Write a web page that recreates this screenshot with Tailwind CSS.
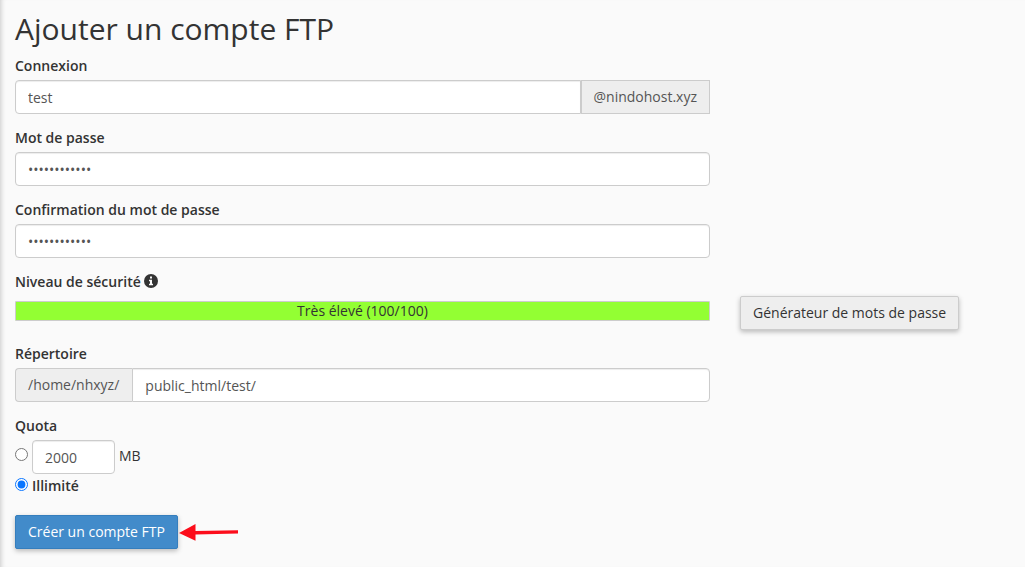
<!DOCTYPE html>
<html lang="fr">
<head>
<meta charset="utf-8">
<meta name="viewport" content="width=device-width, initial-scale=1">
<title>Ajouter un compte FTP</title>
<script src="https://cdn.jsdelivr.net/npm/@tailwindcss/browser@4"></script>
</head>
<body class="min-h-screen bg-[#fafafa] font-['Open_Sans',sans-serif] text-sm leading-5 text-[#333] shadow-[inset_5px_0_5px_-4px_rgba(0,0,0,0.2)]">
<main class="px-[15px] pt-3 pb-4">
  <h1 class="mb-2.5 text-[30px] leading-[34px]">Ajouter un compte FTP</h1>
  <form class="grid grid-cols-[minmax(0,695px)_auto] justify-start gap-x-[30px]">
    <div class="col-start-1 mb-3.5">
      <label for="login" class="mb-1 block font-semibold">Connexion</label>
      <div class="flex h-[34px]">
        <input id="login" type="text" value="test" class="min-w-0 flex-1 rounded-l border border-[#ccc] bg-white px-3 pt-0.5 text-[#555] shadow-[inset_0_1px_1px_rgba(0,0,0,0.075)]">
        <span class="flex items-center border border-[#ccc] bg-[#eee] px-3 text-[#555]">@nindohost.xyz</span>
      </div>
    </div>
    <div class="col-start-1 mb-3.5">
      <label for="password" class="mb-1 block font-semibold">Mot de passe</label>
      <input id="password" type="password" value="motdepasse12" class="block h-[34px] w-full rounded border border-[#ccc] bg-white px-3 text-[#555] shadow-[inset_0_1px_1px_rgba(0,0,0,0.075)]">
    </div>
    <div class="col-start-1 mb-3.5">
      <label for="confirm" class="mb-1 block font-semibold">Confirmation du mot de passe</label>
      <input id="confirm" type="password" value="motdepasse12" class="block h-[34px] w-full rounded border border-[#ccc] bg-white px-3 text-[#555] shadow-[inset_0_1px_1px_rgba(0,0,0,0.075)]">
    </div>
    <div class="col-start-1 mb-3.5">
      <div class="mb-1 flex items-center gap-[3px] font-semibold">
        <span id="strength-label">Niveau de sécurité</span>
        <svg class="mb-0.5 size-3.5" viewBox="0 0 14 14" aria-hidden="true"><circle cx="7" cy="7" r="7" fill="#333"/><path d="M6 2.500h2v2H6zM5 5.700h3v4h1v1.600H5V9.700h1V7.200H5z" fill="#fafafa"/></svg>
      </div>
      <div class="h-[34px] pt-[5px]">
        <div role="meter" aria-labelledby="strength-label" aria-valuenow="100" aria-valuemin="0" aria-valuemax="100" class="h-5 rounded-[1px] border border-[#ccc] bg-[#93ff33] text-center leading-[18px]">Très élevé (100/100)</div>
      </div>
    </div>
    <button type="button" class="col-start-2 mb-3.5 h-[34px] self-end rounded-xs border border-[#ccc] bg-[#eee] px-3 whitespace-nowrap shadow-[0_2px_5px_rgba(0,0,0,0.26)]">Générateur de mots de passe</button>
    <div class="col-start-1 mb-3.5">
      <label for="directory" class="mb-1 block font-semibold">Répertoire</label>
      <div class="flex h-[34px]">
        <span class="flex items-center rounded-l border border-r-0 border-[#ccc] bg-[#eee] pr-[13px] pl-3 text-[#555]">/home/nhxyz/</span>
        <input id="directory" type="text" value="public_html/test/" class="min-w-0 flex-1 rounded-r border border-[#ccc] bg-white px-3 pt-0.5 text-[#555] shadow-[inset_0_1px_1px_rgba(0,0,0,0.075)]">
      </div>
    </div>
    <fieldset class="col-start-1">
      <legend class="mb-1 font-semibold">Quota</legend>
      <div class="flex items-center gap-1">
        <input type="radio" name="quota" aria-label="Quota limité" class="mb-1.5 size-[13px]">
        <input type="text" value="2000" aria-label="Quota en MB" class="h-[34px] w-[83px] rounded border border-[#ccc] bg-white px-3 pt-px text-[#555] shadow-[inset_0_1px_1px_rgba(0,0,0,0.075)]">
        <span class="mb-0.5">MB</span>
      </div>
      <div class="mt-0.5 flex items-center gap-1">
        <input id="unlimited" type="radio" name="quota" checked class="mb-1 size-[13px] accent-[#0a76ff]">
        <label for="unlimited" class="font-semibold">Illimité</label>
      </div>
    </fieldset>
    <div class="col-start-1 mt-[19px] flex items-center gap-px">
      <button type="submit" class="h-[34px] rounded-xs border border-[#357ebd] bg-[#428bca] px-3 text-white shadow-[0_2px_5px_rgba(0,0,0,0.26)]">Créer un compte FTP</button>
      <svg class="h-[18px] w-[60px]" viewBox="0 0 60 18" aria-hidden="true"><path d="M0 10 16.500 1v6.900L59 7.300v3.200l-42.500 1v6.200z" fill="#fc0d1b"/></svg>
    </div>
  </form>
</main>
</body>
</html>
